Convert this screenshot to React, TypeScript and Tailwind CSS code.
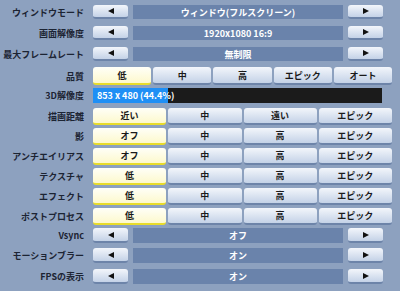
import React from 'react';

const font = { fontFamily: '"Noto Sans CJK JP", "Noto Sans", sans-serif' };

const Label: React.FC<{ text: string }> = ({ text }) => (
  <div className="w-[84px] shrink-0 text-right text-[9px] font-bold leading-none text-[#1c2433]">{text}</div>
);

const Btn: React.FC<{ text?: string; on?: boolean; children?: React.ReactNode; className?: string }> = ({
  text,
  on,
  children,
  className = '',
}) => (
  <div
    className={
      'flex items-center justify-center rounded-[3px] text-[9px] font-bold leading-none text-[#1a1a1a] ' +
      (on
        ? 'bg-gradient-to-b from-[#fffff8] to-[#fdf8cc] border-b-2 border-[#e8dc2a] '
        : 'bg-gradient-to-b from-[#f3f6fb] to-[#c4d2e7] border-b-2 border-[#6d84a9] ') +
      className
    }
  >
    {children ?? text}
  </div>
);

const Tri: React.FC<{ dir: 'l' | 'r' }> = ({ dir }) => (
  <svg width="6" height="6" viewBox="0 0 6 6">
    {dir === 'l' ? <polygon points="6,0 6,6 0,3" fill="#111" /> : <polygon points="0,0 0,6 6,3" fill="#111" />}
  </svg>
);

const ArrowRow: React.FC<{ label: string; value: string; h: string; mt: string }> = ({ label, value, h, mt }) => (
  <div className={'flex items-center ' + mt}>
    <Label text={label} />
    <div className={'ml-[9px] flex gap-[5px] ' + h}>
      <Btn className="w-[35px]">
        <Tri dir="l" />
      </Btn>
      <div className="flex w-[210px] items-center justify-center bg-[#6a83ab] text-[9px] font-bold leading-none text-white">
        {value}
      </div>
      <Btn className="w-[35px]">
        <Tri dir="r" />
      </Btn>
    </div>
  </div>
);

const GridRow: React.FC<{ label: string; opts: string[]; sel: number; cols: 4 | 5; h: string; mt: string }> = ({
  label,
  opts,
  sel,
  cols,
  h,
  mt,
}) => (
  <div className={'flex items-center ' + mt}>
    <Label text={label} />
    <div
      className={
        'ml-[9px] grid w-[299px] gap-[2px] ' + (cols === 5 ? 'grid-cols-5 ' : 'grid-cols-4 ') + h
      }
    >
      {opts.map((o, i) => (
        <Btn key={i} text={o} on={i === sel} />
      ))}
    </div>
  </div>
);

const four = (a: string, b: string, c: string, d: string) => [a, b, c, d];

export default function App() {
  return (
    <div className="h-[291px] w-[400px] overflow-hidden bg-[#8da1bf] pt-[5px]" style={font}>
      <ArrowRow label="ウィンドウモード" value="ウィンドウ(フルスクリーン)" h="h-[14px]" mt="" />
      <ArrowRow label="画面解像度" value="1920x1080 16:9" h="h-[14px]" mt="mt-[7px]" />
      <ArrowRow label="最大フレームレート" value="無制限" h="h-[14px]" mt="mt-[7px]" />
      <GridRow label="品質" opts={['低', '中', '高', 'エピック', 'オート']} sel={0} cols={5} h="h-[18px]" mt="mt-[6px]" />
      <div className="mt-[3px] flex items-center">
        <Label text="3D解像度" />
        <div className="ml-[9px] flex h-[15px] w-[289px] bg-[#1b1b1b]">
          <div className="flex w-[75px] items-center bg-[#1f8ff5] pl-[4px] text-[9px] font-bold leading-none whitespace-nowrap text-white">
            853 x 480 (44.4%)
          </div>
        </div>
      </div>
      <GridRow label="描画距離" opts={four('近い', '中', '遠い', 'エピック')} sel={0} cols={4} h="h-[17px]" mt="mt-[5px]" />
      <GridRow label="影" opts={four('オフ', '中', '高', 'エピック')} sel={0} cols={4} h="h-[17px]" mt="mt-[3px]" />
      <GridRow label="アンチエイリアス" opts={four('オフ', '中', '高', 'エピック')} sel={0} cols={4} h="h-[17px]" mt="mt-[3px]" />
      <GridRow label="テクスチャ" opts={four('低', '中', '高', 'エピック')} sel={0} cols={4} h="h-[17px]" mt="mt-[3px]" />
      <GridRow label="エフェクト" opts={four('低', '中', '高', 'エピック')} sel={0} cols={4} h="h-[17px]" mt="mt-[3px]" />
      <GridRow label="ポストプロセス" opts={four('低', '中', '高', 'エピック')} sel={0} cols={4} h="h-[17px]" mt="mt-[3px]" />
      <ArrowRow label="Vsync" value="オフ" h="h-[15px]" mt="mt-[3px]" />
      <ArrowRow label="モーションブラー" value="オン" h="h-[15px]" mt="mt-[5px]" />
      <ArrowRow label="FPSの表示" value="オン" h="h-[15px]" mt="mt-[6px]" />
    </div>
  );
}
